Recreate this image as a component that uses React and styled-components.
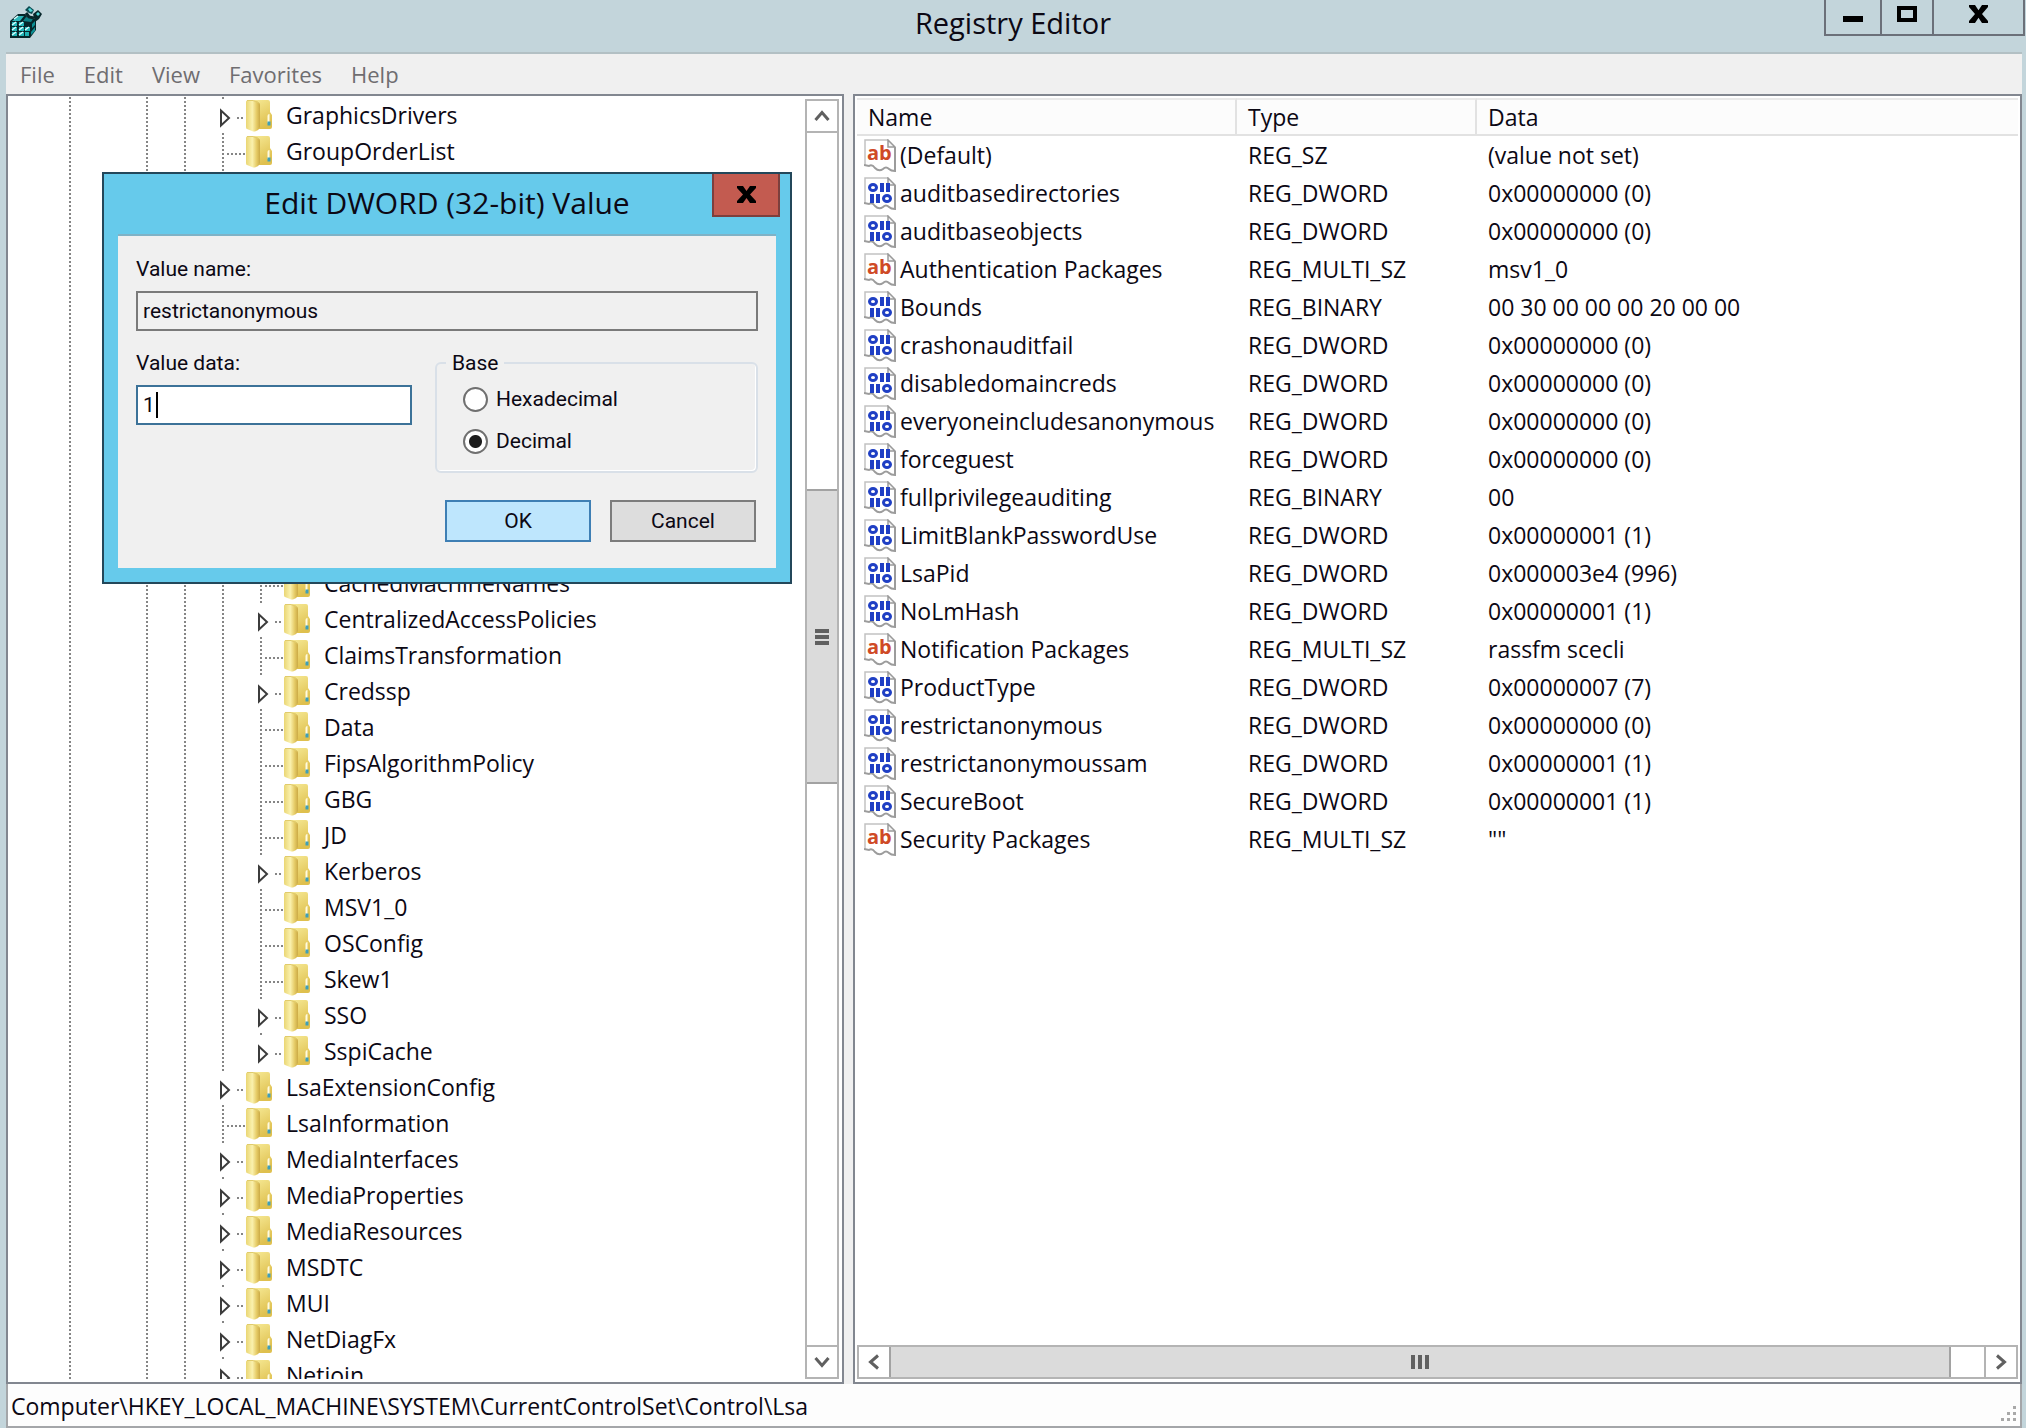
import React from "react";
import styled, { createGlobalStyle, css } from "styled-components";

const ui = `"Open Sans", "Noto Sans", sans-serif`;
const dlg = `Roboto, "Liberation Sans", sans-serif`;

const c = {
  frame: "#c3d5db",
  face: "#f0f0f0",
  edge: "#828790",
  line: "#b4b4b4",
  thumb: "#dbdbdb",
  thumbEdge: "#a2a2a2",
  ink: "#0c0814",
  glyph: "#606060",
};

const Global = createGlobalStyle`
  *, *::before, *::after { box-sizing: border-box; }
  body { margin: 0; background: ${c.frame}; color: ${c.ink}; font: 23px/36px ${ui}; }
  button, input { font: inherit; color: inherit; margin: 0; }
`;

const Window = styled.div`
  position: relative;
  display: flex;
  flex-direction: column;
  height: 100vh;
  min-height: 700px;
  background: ${c.frame};
  overflow: hidden;
`;

const TitleBar = styled.header`
  display: grid;
  grid-template-columns: 202px 1fr 202px;
  height: 52px;
  flex: none;
`;

const AppIcon = styled.svg`
  display: block;
  width: 34px;
  height: 34px;
  margin: 6px 9px;
`;

const Title = styled.h1`
  margin: 0;
  font-size: 29px;
  line-height: 46px;
  font-weight: 400;
  text-align: center;
`;

const Controls = styled.div`
  display: grid;
  grid-template-columns: 54px 52px 1fr;
  height: 36px;
  margin-right: 1px;
  border: solid #6b7079;
  border-width: 0 2px 2px;
`;

const Control = styled.button`
  display: flex;
  justify-content: center;
  align-items: flex-start;
  padding: 5px 0 0;
  border: 0;
  background: none;
  & + & { border-left: 2px solid #6b7079; }
`;

const Frame = styled.div`
  display: flex;
  flex-direction: column;
  flex: 1;
  min-height: 0;
  margin: 0 4px 0 6px;
  border-top: 2px solid #b3c0c4;
  background: ${c.face};
`;

const MenuBar = styled.nav`
  display: flex;
  gap: 29px;
  height: 40px;
  padding: 0 14px;
  flex: none;
`;

const MenuItem = styled.button`
  padding: 0;
  border: 0;
  background: none;
  color: #6f6d70;
  font-size: 22px;
  line-height: 38px;
`;

const Panes = styled.main`
  display: grid;
  grid-template-columns: 838px 1fr;
  grid-template-rows: 100%;
  gap: 9px;
  flex: 1;
  min-height: 0;
`;

const Pane = styled.section`
  display: flex;
  min-width: 0;
  border: 2px solid ${c.edge};
  background: #fff;
  padding: 3px;
  ${(p) => p.$column && css`flex-direction: column; padding: 2px 2px 3px;`}
`;

const Tree = styled.ul`
  flex: 1;
  margin: -2px 0 0;
  padding: 0 0 0 55px;
  list-style: none;
  overflow: hidden;
`;

const Node = styled.li`
  display: flex;
  align-items: center;
  height: ${(p) => 36 * (p.$rows || 1)}px;
  white-space: nowrap;
`;

const Guide = styled.span`
  flex: none;
  align-self: stretch;
  width: ${(p) => (p.$wide ? 77 : 38)}px;
  background: repeating-linear-gradient(#858585 0 2px, #fff 2px 4px) 3px 0 / 2px 100% no-repeat;
`;

const Branch = styled.svg`
  flex: none;
  width: 26px;
  height: 36px;
`;

const FolderSvg = styled.svg`
  flex: none;
  width: 28px;
  height: 33px;
  margin-right: 13px;
`;

const VBar = styled.div`
  display: flex;
  flex-direction: column;
  width: 34px;
  flex: none;
  border: 2px solid ${c.line};
`;

const HBar = styled.div`
  display: flex;
  height: 34px;
  flex: none;
  border: 2px solid ${c.line};
`;

const Arrow = styled.button`
  display: grid;
  place-items: center;
  flex: none;
  width: 30px;
  height: 30px;
  padding: 0;
  border: 0;
  background: #fff;
  ${(p) => p.$rule && css`
    height: 32px;
    border-${p.$rule}: 2px solid ${c.line};
  `}
  ${(p) => p.$side && css`
    width: 32px;
    border-${p.$side}: 2px solid ${c.line};
  `}
`;

const Track = styled.div`
  flex: ${(p) => p.$grow} 0 0;
`;

const Thumb = styled.div`
  display: flex;
  align-items: center;
  justify-content: center;
  gap: ${(p) => (p.$vertical ? 2 : 3)}px;
  flex: ${(p) => p.$grow} 0 0;
  flex-direction: ${(p) => (p.$vertical ? "column" : "row")};
  background: ${c.thumb};
  border: solid ${c.thumbEdge};
  border-width: ${(p) => (p.$vertical ? "2px 0" : "0 2px")};
`;

const Ridge = styled.i`
  width: ${(p) => (p.$vertical ? 14 : 4)}px;
  height: ${(p) => (p.$vertical ? 4 : 14)}px;
  background: ${c.glyph};
`;

const ListArea = styled.div`
  flex: 1;
  min-height: 0;
  overflow: hidden;
`;

const Values = styled.table`
  width: 100%;
  table-layout: fixed;
  border-collapse: separate;
  border-spacing: 0;
`;

const Head = styled.th`
  height: 38px;
  padding: 0 0 0 11px;
  border-top: 2px solid #e9e9e9;
  border-bottom: 2px solid #e2e2e2;
  border-right: 2px solid #e2e2e2;
  background: #fcfcfc;
  font-weight: 400;
  line-height: 34px;
  text-align: left;
  &:last-child { border-right: 0; }
`;

const Cell = styled.td`
  height: 38px;
  padding: 0 0 0 11px;
  white-space: nowrap;
`;

const NameCell = styled(Cell)`
  padding-left: 7px;
`;

const ValueName = styled.span`
  display: flex;
  align-items: center;
  gap: 4px;
`;

const ValueSvg = styled.svg`
  flex: none;
  width: 32px;
  height: 33px;
`;

const Status = styled.footer`
  display: flex;
  justify-content: space-between;
  align-items: flex-end;
  flex: none;
  height: 44px;
  padding: 0 4px 2px 3px;
  border: solid #a4a6a9;
  border-width: 0 2px 2px;
  background: #fdfdfd;
  line-height: 36px;
`;

const Dialog = styled.form`
  position: absolute;
  left: 102px;
  top: 172px;
  width: 690px;
  padding: 0 14px 14px;
  border: 2px solid #23475a;
  background: #66caeb;
  font: 21px/28px ${dlg};
`;

const DialogBar = styled.header`
  display: grid;
  grid-template-columns: 64px 1fr 64px;
  height: 60px;
`;

const DialogTitle = styled.h2`
  margin: 0;
  font: 400 30px/58px ${ui};
  text-align: center;
  white-space: nowrap;
`;

const DialogClose = styled.button`
  display: grid;
  place-items: center;
  width: 68px;
  height: 43px;
  padding: 0;
  border: 2px solid #7d3f3d;
  border-top: 0;
  background: #c35b50;
`;

const DialogBody = styled.div`
  display: flex;
  flex-direction: column;
  height: 334px;
  padding: 19px 18px 26px;
  border-top: 2px solid #7fb2c6;
  background: ${c.face};
`;

const Field = styled.div`
  display: flex;
  flex-direction: column;
  gap: 8px;
`;

const Label = styled.label`
  line-height: 28px;
`;

const TextBox = styled.input`
  display: block;
  width: 100%;
  height: 40px;
  padding: 0 5px;
  border: 2px solid ${(p) => (p.readOnly ? "#7a7a7a" : "#3c7298")};
  background: ${(p) => (p.readOnly ? c.face : "#fff")};
  outline: 0;
  border-radius: 0;
`;

const Editing = styled.div`
  position: relative;
`;

const Caret = styled.i`
  position: absolute;
  left: 20px;
  top: 7px;
  width: 2px;
  height: 26px;
  background: #000;
`;

const Columns = styled.div`
  display: grid;
  grid-template-columns: 276px 1fr;
  gap: 23px;
  margin-top: 18px;
`;

const Group = styled.fieldset`
  display: flex;
  flex-direction: column;
  gap: 14px;
  min-width: 0;
  height: 124px;
  margin: 0;
  padding: 8px 26px 0;
  border: 2px solid #d9e0e8;
  border-radius: 6px;
  box-shadow: inset -1px -1px 0 #fff;
`;

const Legend = styled.legend`
  margin-left: -17px;
  padding: 0 6px;
  line-height: 28px;
`;

const Choice = styled.label`
  display: flex;
  align-items: center;
  gap: 8px;
  line-height: 28px;
`;

const Radio = styled.input`
  appearance: none;
  width: 25px;
  height: 25px;
  border: 2px solid #707070;
  border-radius: 50%;
  background: #fff;
  &:checked { background: radial-gradient(circle, #1d1d1d 0 6px, #fff 7px); }
`;

const Actions = styled.div`
  display: flex;
  justify-content: flex-end;
  gap: 19px;
  margin-top: auto;
  padding-right: 2px;
`;

const Action = styled.button`
  width: 146px;
  height: 42px;
  padding: 0;
  border: 2px solid ${(p) => (p.$primary ? "#3e7fb4" : "#7c7c7c")};
  background: ${(p) => (p.$primary ? "#bee6fd" : "#dddddd")};
`;

function Chevron({ turn = 0 }) {
  return (
    <svg width="18" height="18" viewBox="0 0 18 18" aria-hidden="true">
      <path d="M2.500 13 L9 5.500 L15.500 13" fill="none" stroke={c.glyph} strokeWidth="3" transform={`rotate(${turn} 9 9)`} />
    </svg>
  );
}

function Cross({ w = 19, h = 17 }) {
  return (
    <svg width={w} height={h} viewBox="0 0 19 17" preserveAspectRatio="none" aria-hidden="true">
      <path d="M0 0H6L9.500 5L13 0H19V2L13 8.500L19 15V17H13L9.500 12L6 17H0V15L6 8.500L0 2Z" fill="#000" />
    </svg>
  );
}

function Folder() {
  return (
    <FolderSvg viewBox="0 0 28 33" aria-hidden="true">
      <path d="M9 1H23Q25 1 25 3V13L27 16V28Q27 30 25 30H10Z" fill="url(#back)" />
      <path d="M2 1.500H10Q15 3 15 6V28Q14 31 11 32Q9 33 7 32L2 30Q1 30 1 28V3Q1 1.500 2 1.500Z" fill="url(#front)" />
      <path d="M2 1.500H8L14 4" fill="none" stroke="#e0cb6c" strokeWidth="1" />
      <path d="M22.500 17Q22.500 15 24.500 15V24H22.500Z" fill="#fffbe0" />
      <rect x="22.500" y="22.500" width="3" height="4" fill="#3f9fb8" />
    </FolderSvg>
  );
}

function BranchLines({ expandable }) {
  return (
    <Branch viewBox="0 0 26 36" aria-hidden="true">
      <g stroke="#858585" strokeWidth="2" strokeDasharray="2 2">
        {expandable ? (
          <>
            <path d="M4 0V4" strokeDasharray="2 6" />
            <path d="M18 21H26" />
          </>
        ) : (
          <>
            <path d="M4 0V36" />
            <path d="M8 21H26" />
          </>
        )}
      </g>
      {expandable && <path d="M2 13.500V28.500L10 21Z" fill="#fff" stroke="#3c3c3c" strokeWidth="2" />}
    </Branch>
  );
}

function PageShape({ children }) {
  return (
    <ValueSvg viewBox="0 0 32 33" aria-hidden="true">
      <path d="M1 27V1H24L31 8V32Q27 32 25 30Q22 27 19 30Q15 33 11 29Q8 25 5 27Z" fill="#fff" />
      <path d="M1 26V1H24" fill="none" stroke="#c2c2c2" strokeWidth="1.500" />
      <path d="M24 1V8H31Z" fill="#f4f4f4" stroke="#9a9a9a" strokeWidth="1.500" />
      <path d="M31 8V32Q27 32 25 30Q22 27 19 30Q15 33 11 29Q8 25 5 27L0 26" fill="none" stroke="#9c9c9c" strokeWidth="2" />
      {children}
    </ValueSvg>
  );
}

function StringIcon() {
  return (
    <PageShape>
      <text x="3" y="21" fontFamily="Open Sans" fontWeight="700" fontSize="20" fill="#cf4a26">ab</text>
    </PageShape>
  );
}

function BinaryIcon() {
  return (
    <PageShape>
      <g fill="#1f3fc4">
        <rect x="16" y="6" width="4" height="9" />
        <rect x="22" y="6" width="4" height="9" />
        <rect x="6" y="17" width="4" height="9" />
        <rect x="12" y="17" width="4" height="9" />
      </g>
      <g fill="none" stroke="#1f3fc4" strokeWidth="3">
        <ellipse cx="9" cy="10.500" rx="3.500" ry="3" />
        <ellipse cx="23" cy="21.500" rx="3.500" ry="3" />
      </g>
    </PageShape>
  );
}

function RegistryIcon() {
  return (
    <AppIcon viewBox="0 0 34 34" aria-hidden="true">
      <path d="M1 15L9 8H16L19 12L27 13V24L21 32H1Z" fill="#06262a" />
      <path d="M3 15L9 10H15L11 15Z" fill="#2ab5b8" />
      <path d="M14 15L17 11L24 13L22 16Z" fill="#0d7f84" />
      <g fill="#1fb3b5">
        <rect x="3" y="16" width="5" height="4" />
        <rect x="10" y="16" width="5" height="4" />
        <rect x="3" y="21" width="5" height="4" />
        <rect x="10" y="21" width="5" height="4" />
        <rect x="16" y="21" width="5" height="4" />
        <rect x="3" y="26" width="5" height="4" />
        <rect x="10" y="26" width="5" height="4" />
        <rect x="16" y="26" width="4" height="4" />
      </g>
      <path d="M3 19L7 16M10 19L14 16M3 24L7 21M10 24L14 21M16 24L20 21M3 29L7 26M10 29L14 26M5 13L9 10" stroke="#d9ffff" strokeWidth="1.500" />
      <path d="M23 18L26 15V19L23 22ZM22 26L26 21V25L22 29Z" fill="#0c8f94" />
      <path d="M16 4L20 0L25 4L23 8L20 7Z" fill="#0a4a50" />
      <path d="M19 3L21 2L24 5L21 6Z" fill="#4fd6d8" />
      <path d="M24 8L29 4L33 8L30 13L26 16Z" fill="#06262a" />
      <path d="M27 8L29 6L31 8L29 10Z" fill="#4fd6d8" />
      <path d="M17 7L20 11L25 12" fill="none" stroke="#06262a" strokeWidth="3" />
    </AppIcon>
  );
}

const tree = [
  ["GraphicsDrivers", 0, true],
  ["GroupOrderList", 0, false],
  { covered: 11 },
  ["CachedMachineNames", 1, false],
  ["CentralizedAccessPolicies", 1, true],
  ["ClaimsTransformation", 1, false],
  ["Credssp", 1, true],
  ["Data", 1, false],
  ["FipsAlgorithmPolicy", 1, false],
  ["GBG", 1, false],
  ["JD", 1, false],
  ["Kerberos", 1, true],
  ["MSV1_0", 1, false],
  ["OSConfig", 1, false],
  ["Skew1", 1, false],
  ["SSO", 1, true],
  ["SspiCache", 1, true],
  ["LsaExtensionConfig", 0, true],
  ["LsaInformation", 0, false],
  ["MediaInterfaces", 0, true],
  ["MediaProperties", 0, true],
  ["MediaResources", 0, true],
  ["MSDTC", 0, true],
  ["MUI", 0, true],
  ["NetDiagFx", 0, true],
  ["Netjoin", 0, true],
];

const values = [
  ["(Default)", "REG_SZ", "(value not set)"],
  ["auditbasedirectories", "REG_DWORD", "0x00000000 (0)"],
  ["auditbaseobjects", "REG_DWORD", "0x00000000 (0)"],
  ["Authentication Packages", "REG_MULTI_SZ", "msv1_0"],
  ["Bounds", "REG_BINARY", "00 30 00 00 00 20 00 00"],
  ["crashonauditfail", "REG_DWORD", "0x00000000 (0)"],
  ["disabledomaincreds", "REG_DWORD", "0x00000000 (0)"],
  ["everyoneincludesanonymous", "REG_DWORD", "0x00000000 (0)"],
  ["forceguest", "REG_DWORD", "0x00000000 (0)"],
  ["fullprivilegeauditing", "REG_BINARY", "00"],
  ["LimitBlankPasswordUse", "REG_DWORD", "0x00000001 (1)"],
  ["LsaPid", "REG_DWORD", "0x000003e4 (996)"],
  ["NoLmHash", "REG_DWORD", "0x00000001 (1)"],
  ["Notification Packages", "REG_MULTI_SZ", "rassfm scecli"],
  ["ProductType", "REG_DWORD", "0x00000007 (7)"],
  ["restrictanonymous", "REG_DWORD", "0x00000000 (0)"],
  ["restrictanonymoussam", "REG_DWORD", "0x00000001 (1)"],
  ["SecureBoot", "REG_DWORD", "0x00000001 (1)"],
  ["Security Packages", "REG_MULTI_SZ", '""'],
];

function KeyTree() {
  return (
    <Tree>
      {tree.map((item, i) =>
        item.covered ? (
          <Node key={i} $rows={item.covered} aria-hidden="true">
            <Guide $wide />
            <Guide />
            <Guide />
            <Guide />
          </Node>
        ) : (
          <Node key={i}>
            <Guide $wide />
            <Guide />
            <Guide />
            {item[1] === 1 && <Guide />}
            <BranchLines expandable={item[2]} />
            <Folder />
            <span>{item[0]}</span>
          </Node>
        )
      )}
    </Tree>
  );
}

function EditDialog() {
  return (
    <Dialog role="dialog" aria-labelledby="dialog-title" onSubmit={(e) => e.preventDefault()}>
      <DialogBar>
        <span />
        <DialogTitle id="dialog-title">Edit DWORD (32-bit) Value</DialogTitle>
        <DialogClose type="button" aria-label="Close">
          <Cross />
        </DialogClose>
      </DialogBar>
      <DialogBody>
        <Field>
          <Label htmlFor="value-name">Value name:</Label>
          <TextBox id="value-name" readOnly value="restrictanonymous" />
        </Field>
        <Columns>
          <Field>
            <Label htmlFor="value-data">Value data:</Label>
            <Editing>
              <TextBox id="value-data" defaultValue="1" />
              <Caret />
            </Editing>
          </Field>
          <Group>
            <Legend>Base</Legend>
            <Choice>
              <Radio type="radio" name="base" />
              Hexadecimal
            </Choice>
            <Choice>
              <Radio type="radio" name="base" defaultChecked />
              Decimal
            </Choice>
          </Group>
        </Columns>
        <Actions>
          <Action $primary>OK</Action>
          <Action type="button">Cancel</Action>
        </Actions>
      </DialogBody>
    </Dialog>
  );
}

const Defs = styled.svg`
  position: absolute;
  width: 0;
  height: 0;
`;

export default function App() {
  return (
    <Window>
      <Global />
      <Defs aria-hidden="true">
        <defs>
          <linearGradient id="front">
            <stop offset="0" stopColor="#ead673" />
            <stop offset="0.450" stopColor="#faf1ae" />
            <stop offset="0.750" stopColor="#e6cc68" />
            <stop offset="1" stopColor="#cbaa45" />
          </linearGradient>
          <linearGradient id="back" x1="0" y1="0" x2="0.400" y2="1">
            <stop offset="0" stopColor="#f6e995" />
            <stop offset="1" stopColor="#dfc04e" />
          </linearGradient>
        </defs>
      </Defs>
      <TitleBar>
        <RegistryIcon />
        <Title>Registry Editor</Title>
        <Controls>
          <Control aria-label="Minimize">
            <svg width="20" height="18"><rect y="11" width="20" height="6" /></svg>
          </Control>
          <Control aria-label="Maximize">
            <svg width="20" height="18"><rect x="2" y="3" width="16" height="12" fill="none" stroke="#000" strokeWidth="4" /></svg>
          </Control>
          <Control aria-label="Close">
            <Cross h={18} />
          </Control>
        </Controls>
      </TitleBar>
      <Frame>
        <MenuBar>
          {["File", "Edit", "View", "Favorites", "Help"].map((m) => (
            <MenuItem key={m}>{m}</MenuItem>
          ))}
        </MenuBar>
        <Panes>
          <Pane>
            <KeyTree />
            <VBar>
              <Arrow $rule="bottom" aria-label="Scroll up"><Chevron /></Arrow>
              <Track $grow={358} />
              <Thumb $vertical $grow={292}>
                <Ridge $vertical /><Ridge $vertical /><Ridge $vertical />
              </Thumb>
              <Track $grow={564} />
              <Arrow $rule="top" aria-label="Scroll down"><Chevron turn={180} /></Arrow>
            </VBar>
          </Pane>
          <Pane $column>
            <ListArea>
              <Values>
                <colgroup>
                  <col width="380" />
                  <col width="240" />
                  <col />
                </colgroup>
                <thead>
                  <tr>
                    <Head scope="col">Name</Head>
                    <Head scope="col">Type</Head>
                    <Head scope="col">Data</Head>
                  </tr>
                </thead>
                <tbody>
                  {values.map(([name, type, data]) => (
                    <tr key={name}>
                      <NameCell>
                        <ValueName>
                          {type.endsWith("SZ") ? <StringIcon /> : <BinaryIcon />}
                          {name}
                        </ValueName>
                      </NameCell>
                      <Cell>{type}</Cell>
                      <Cell>{data}</Cell>
                    </tr>
                  ))}
                </tbody>
              </Values>
            </ListArea>
            <HBar>
              <Arrow aria-label="Scroll left"><Chevron turn={-90} /></Arrow>
              <Thumb $grow={1062}>
                <Ridge /><Ridge /><Ridge />
              </Thumb>
              <Track $grow={33} />
              <Arrow $side="left" aria-label="Scroll right"><Chevron turn={90} /></Arrow>
            </HBar>
          </Pane>
        </Panes>
        <Status>
          <span>Computer\HKEY_LOCAL_MACHINE\SYSTEM\CurrentControlSet\Control\Lsa</span>
          <svg width="16" height="18" viewBox="0 0 16 18" fill="#a9a9a9" aria-hidden="true">
            <path d="M13 0h3v3h-3zM7 6h3v3H7zM13 6h3v3h-3zM1 12h3v3H1zM7 12h3v3H7zM13 12h3v3h-3z" />
          </svg>
        </Status>
      </Frame>
      <EditDialog />
    </Window>
  );
}
